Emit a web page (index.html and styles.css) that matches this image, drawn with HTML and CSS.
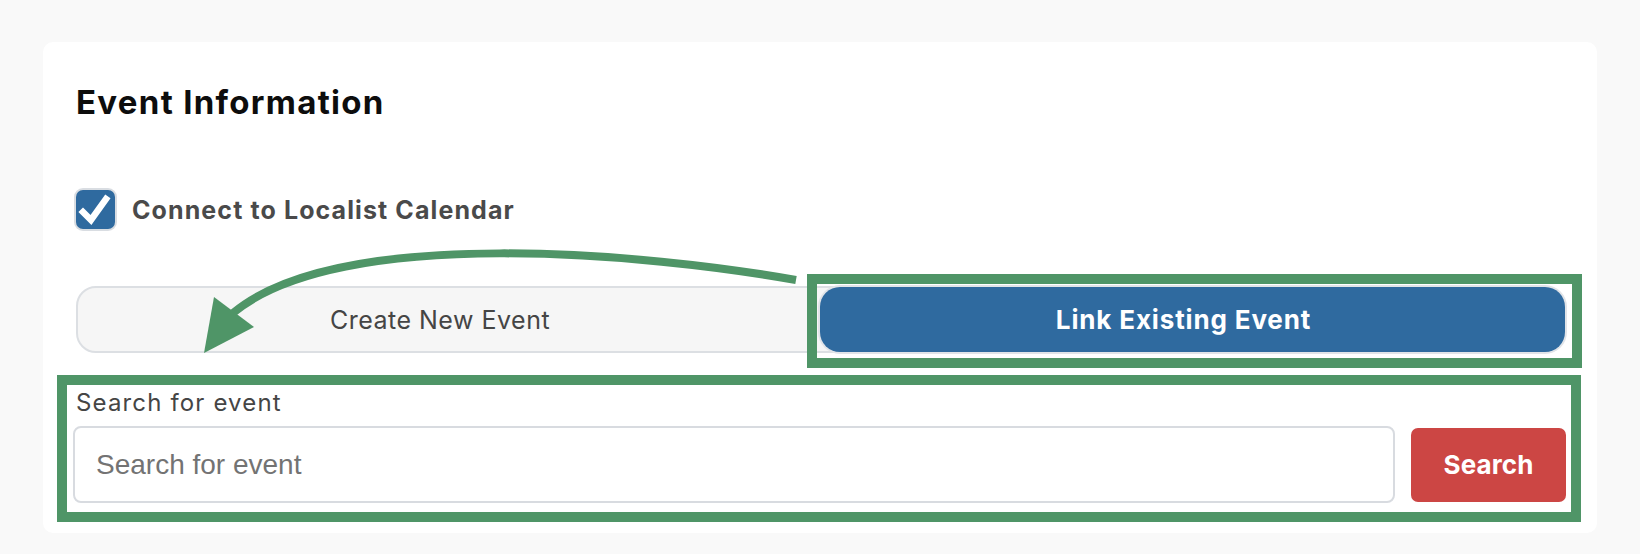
FILE: index.html
```html
<!DOCTYPE html>
<html lang="en">
<head>
<meta charset="utf-8">
<title>Event Information</title>
<link rel="stylesheet" href="styles.css">
</head>
<body>
<main class="page">
  <section class="card">
    <h2 class="card-title">Event Information</h2>
    <label class="check-row">
      <span class="checkbox">
        <svg viewBox="0 0 39 39" width="39" height="39" aria-hidden="true"><path d="M7 22 L15 30 L30 9" fill="none" stroke="#fff" stroke-width="6.5" stroke-linecap="square" stroke-linejoin="miter"/></svg>
      </span>
      <span class="check-label">Connect to Localist Calendar</span>
    </label>
    <div class="segmented">
      <button class="seg seg-off" type="button">Create New Event</button>
      <button class="seg seg-on" type="button">Link Existing Event<span class="annot annot-link"></span></button>
    </div>
    <div class="search-block">
      <span class="annot annot-search"></span>
      <label class="search-label" for="q">Search for event</label>
      <div class="search-row">
        <input id="q" class="search-input" type="text" placeholder="Search for event">
        <button class="search-btn" type="button">Search</button>
      </div>
    </div>
  </section>
  <svg class="arrow" width="1640" height="554" viewBox="0 0 1640 554" aria-hidden="true">
    <path d="M 796 280 C 650 254, 340 224, 233 313" fill="none" stroke="#4f9567" stroke-width="8"/>
    <polygon points="204,353 214,297 254,327" fill="#4f9567"/>
  </svg>
</main>
</body>
</html>
```

FILE: styles.css
```css
* { box-sizing: border-box; }
html, body { margin: 0; padding: 0; }
body {
  background: #f9f9f9;
  font-family: Inter, "Noto Sans", sans-serif;
}
.page {
  position: relative;
  width: 1640px;
  height: 554px;
  padding: 42px 43px 0 43px;
}
.card {
  background: #fff;
  border-radius: 10px;
  height: 491px;
  padding: 41px 31px 30px 33px;
  display: flex;
  flex-direction: column;
}
.card-title {
  margin: 0;
  font-size: 33px;
  line-height: 38px;
  font-weight: 700;
  letter-spacing: 1.3px;
  color: #0d0d0d;
}
.check-row {
  margin-top: 69px;
  display: flex;
  align-items: center;
  gap: 17px;
}
.checkbox {
  width: 39px;
  height: 39px;
  border-radius: 7px;
  background: #2f6a9f;
  box-shadow: 0 0 0 2px #d9dde2;
  display: flex;
}
.check-label {
  font-size: 25px;
  font-weight: 700;
  color: #4a4a4a;
  letter-spacing: 1.1px;
}
.segmented {
  margin-top: 57px;
  height: 67px;
  display: flex;
  border: 2px solid #dcdfe3;
  border-radius: 20px;
  background: #f6f6f6;
}
.seg {
  border: 0;
  background: transparent;
  font-family: Inter, "Noto Sans", sans-serif;
  cursor: pointer;
}
.seg-off {
  flex: 1;
  color: #454545;
  font-size: 25px;
  font-weight: 400;
  letter-spacing: 0.5px;
  padding-right: 24px;
}
.seg-on {
  position: relative;
  flex: 0 0 745px;
  margin: -1px -1px -1px 0;
  background: #2f6a9f;
  color: #fff;
  font-size: 26px;
  font-weight: 700;
  letter-spacing: 0.85px;
  padding-right: 24px;
  border-radius: 20px;
  box-shadow: 0 0 0 2px #e1e4e8;
}
.annot {
  position: absolute;
  border: 10px solid #4f9567;
  pointer-events: none;
}
.annot-link {
  top: -13px;
  left: -13px;
  right: -17px;
  bottom: -16px;
}
.search-block {
  position: relative;
  margin-top: 35px;
  display: flex;
  flex-direction: column;
}
.annot-search {
  top: -13px;
  left: -19px;
  right: -15px;
  bottom: -19px;
}
.search-label {
  font-size: 24px;
  line-height: 29px;
  letter-spacing: 1.15px;
  color: #454545;
}
.search-row {
  margin-top: 9px;
  display: flex;
  gap: 16px;
  align-items: center;
}
.search-input {
  flex: 1;
  height: 77px;
  margin-left: -3px;
  border: 2px solid #d8dbe0;
  border-radius: 8px;
  padding: 0 21px;
  font-family: "Liberation Sans", Arial, sans-serif;
  font-size: 28px;
  color: #333;
  background: #fff;
}
.search-input::placeholder { color: #737373; }
.search-btn {
  width: 155px;
  height: 74px;
  border: 0;
  border-radius: 7px;
  background: #cc4644;
  color: #fff;
  font-family: Inter, "Noto Sans", sans-serif;
  font-size: 26px;
  font-weight: 700;
  letter-spacing: 0.1px;
}
.arrow {
  position: absolute;
  top: 0;
  left: 0;
  pointer-events: none;
}
```
